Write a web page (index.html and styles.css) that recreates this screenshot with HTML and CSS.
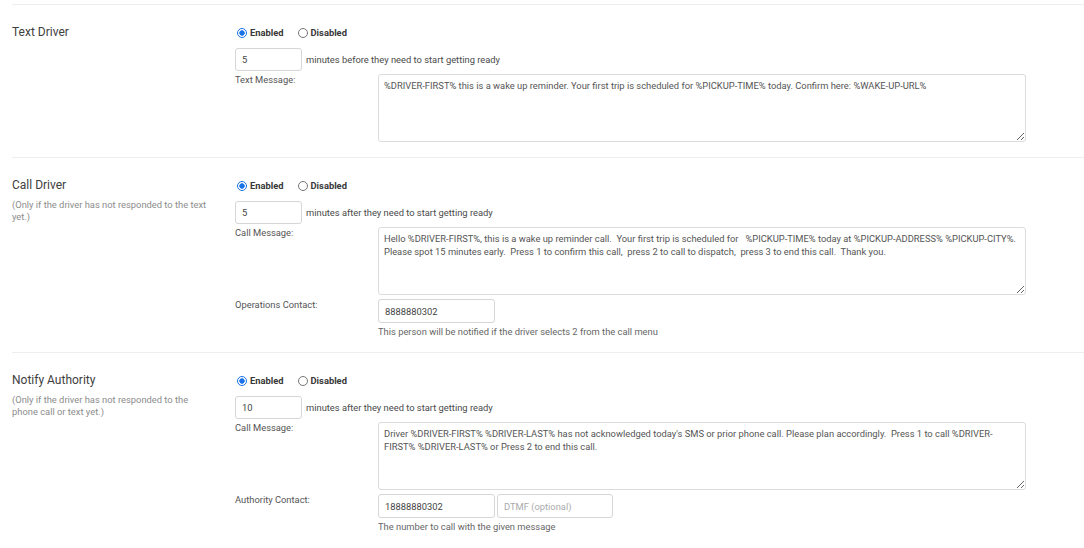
FILE: index.html
```html
<!DOCTYPE html>
<html>
<head>
<meta charset="utf-8">
<link rel="stylesheet" href="styles.css">
</head>
<body>
<div class="page">
  <section class="row">
    <div class="side">
      <div class="title">Text Driver</div>
    </div>
    <div class="main">
      <div class="radios">
        <label class="opt"><input type="radio" name="r1" checked><b>Enabled</b></label>
        <label class="opt"><input type="radio" name="r1"><b>Disabled</b></label>
      </div>
      <div class="minutes"><input class="num" type="text" value="5"><span>minutes before they need to start getting ready</span></div>
      <div class="field">
        <div class="lbl">Text Message:</div>
        <textarea class="msg">%DRIVER-FIRST% this is a wake up reminder. Your first trip is scheduled for %PICKUP-TIME% today. Confirm here: %WAKE-UP-URL%</textarea>
      </div>
    </div>
  </section>

  <section class="row">
    <div class="side">
      <div class="title">Call Driver</div>
      <div class="sub">(Only if the driver has not responded to the text yet.)</div>
    </div>
    <div class="main">
      <div class="radios">
        <label class="opt"><input type="radio" name="r2" checked><b>Enabled</b></label>
        <label class="opt"><input type="radio" name="r2"><b>Disabled</b></label>
      </div>
      <div class="minutes"><input class="num" type="text" value="5"><span>minutes after they need to start getting ready</span></div>
      <div class="field">
        <div class="lbl">Call Message:</div>
        <textarea class="msg">Hello %DRIVER-FIRST%, this is a wake up reminder call.  Your first trip is scheduled for   %PICKUP-TIME% today at %PICKUP-ADDRESS% %PICKUP-CITY%.  Please spot 15 minutes early.  Press 1 to confirm this call,  press 2 to call to dispatch,  press 3 to end this call.  Thank you.</textarea>
      </div>
      <div class="field contact">
        <div class="lbl">Operations Contact:</div>
        <div class="col">
          <div class="inputs"><input class="phone" type="text" value="8888880302"></div>
          <div class="help">This person will be notified if the driver selects 2 from the call menu</div>
        </div>
      </div>
    </div>
  </section>

  <section class="row">
    <div class="side">
      <div class="title">Notify Authority</div>
      <div class="sub">(Only if the driver has not responded to the phone call or text yet.)</div>
    </div>
    <div class="main">
      <div class="radios">
        <label class="opt"><input type="radio" name="r3" checked><b>Enabled</b></label>
        <label class="opt"><input type="radio" name="r3"><b>Disabled</b></label>
      </div>
      <div class="minutes"><input class="num" type="text" value="10"><span>minutes after they need to start getting ready</span></div>
      <div class="field">
        <div class="lbl">Call Message:</div>
        <textarea class="msg">Driver %DRIVER-FIRST% %DRIVER-LAST% has not acknowledged today's SMS or prior phone call. Please plan accordingly.  Press 1 to call %DRIVER-FIRST% %DRIVER-LAST% or Press 2 to end this call.</textarea>
      </div>
      <div class="field contact">
        <div class="lbl">Authority Contact:</div>
        <div class="col">
          <div class="inputs"><input class="phone" type="text" value="18888880302"><input class="phone dtmf" type="text" placeholder="DTMF (optional)"></div>
          <div class="help">The number to call with the given message</div>
        </div>
      </div>
    </div>
  </section>
</div>
</body>
</html>
```
FILE: styles.css
```css
* { box-sizing: border-box; }
html, body { margin: 0; padding: 0; background: #fff; }
body {
  font-family: Roboto, "Liberation Sans", Arial, sans-serif;
  font-size: 9.35px;
  color: #444;
}
.page {
  margin: 4px 0 0 12px;
}
.row {
  display: flex;
  border-top: 1px solid #eeeeee;
  padding: 20px 0 15px 0;
}
.side {
  width: 223px;
  flex: none;
}
.title {
  font-size: 12px;
  line-height: 14px;
  color: #404040;
}
.sub {
  width: 198px;
  margin-top: 7px;
  line-height: 12px;
  color: #8c8c8c;
}
.main {
  display: flex;
  flex-direction: column;
}
.radios {
  display: flex;
  align-items: center;
  height: 15px;
  margin-bottom: 8px;
  gap: 12px;
}
.opt {
  display: flex;
  align-items: center;
  color: #383838;
}
.opt b { font-weight: 700; }
.opt input {
  appearance: none;
  -webkit-appearance: none;
  width: 10px;
  height: 10px;
  margin: 0 3px 0 2px;
  border: 1px solid #767676;
  border-radius: 50%;
  background: #fff;
}
.opt input:checked {
  border-color: #1a73e8;
  background: radial-gradient(circle, #1a73e8 0 2.4px, #fff 3px);
}
.minutes {
  display: flex;
  align-items: center;
  margin-bottom: 3px;
}
.minutes span { margin-left: 4px; color: #4a4a4a; }
input[type=text] {
  font-family: Roboto, "Liberation Sans", Arial, sans-serif;
  font-size: 9.35px;
  color: #444;
  border: 1px solid #d6d6d6;
  border-radius: 3px;
  padding: 0 6px;
  outline: none;
  margin: 0;
}
.num {
  width: 67px;
  height: 23px;
}
.field {
  display: flex;
  align-items: flex-start;
}
.lbl {
  width: 143px;
  flex: none;
  line-height: 12px;
  color: #555;
}
.msg {
  width: 648px;
  height: 68px;
  margin: 0;
  padding: 4px 5px;
  border: 1px solid #dcdcdc;
  border-radius: 3px;
  font-family: Roboto, "Liberation Sans", Arial, sans-serif;
  font-size: 9.35px;
  line-height: 13px;
  color: #555;
  outline: none;
  overflow: hidden;
}
.contact { margin-top: 4px; }
.col {
  display: flex;
  flex-direction: column;
}
.inputs {
  display: flex;
  gap: 2px;
}
.phone {
  width: 117px;
  height: 24px;
}
.dtmf { width: 116px; }
.dtmf::placeholder { color: #aaa; }
.help {
  margin-top: 3px;
  line-height: 11px;
  color: #666;
}
```
